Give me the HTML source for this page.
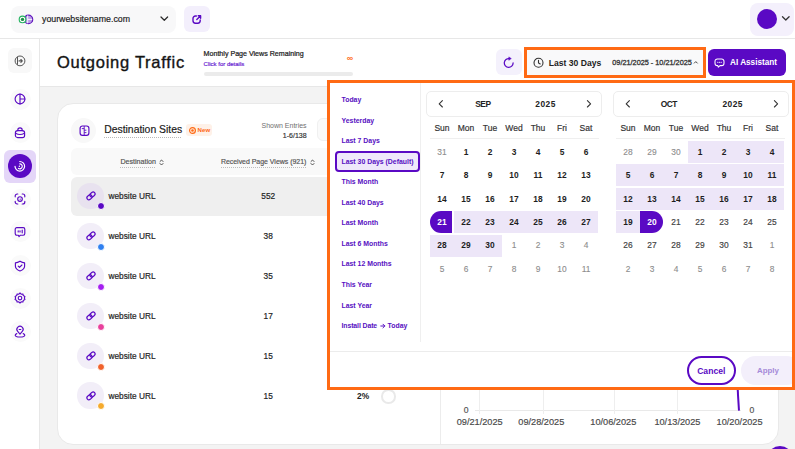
<!DOCTYPE html>
<html><head><meta charset="utf-8"><style>
html,body{margin:0;padding:0;}
body{width:795px;height:449px;overflow:hidden;position:relative;background:#fff;font-family:"Liberation Sans",sans-serif;}
.t{position:absolute;line-height:1;white-space:nowrap;}
svg{display:block}
</style></head><body>
<div style="position:absolute;left:0px;top:38px;width:795px;height:1px;background:#e7e7e7"></div>
<div style="position:absolute;left:11px;top:6px;width:165px;height:26.5px;background:#f8f8f9;border-radius:8px"></div>
<svg style="position:absolute;left:17px;top:12px;overflow:visible;" width="18" height="15" viewBox="0 0 18 15"><circle cx="11.4" cy="7.4" r="4.3" fill="#b99ce6" stroke="#5f14bd" stroke-width="1.2"/><path d="M10.7 3.4 V11.4 M10.7 7.4 H15.2" stroke="#fff" stroke-width="0.9" fill="none"/><circle cx="5.5" cy="7.4" r="3.3" fill="#fff" stroke="#22b35f" stroke-width="1.1"/><circle cx="5.5" cy="7.4" r="1.7" fill="#1c8c46"/></svg>
<div class="t" style="left:42.00px;top:14.85px;font-size:8.8px;font-weight:400;color:#222;-webkit-text-stroke:0.18px currentColor;">yourwebsitename.com</div>
<svg style="position:absolute;left:159px;top:15px;overflow:visible;" width="10" height="7" viewBox="0 0 10 7"><path d="M2 2 L5.3 5.3 L8.6 2" fill="none" stroke="#2a2a2a" stroke-width="1.25" stroke-linecap="round" stroke-linejoin="round"/></svg>
<div style="position:absolute;left:183.6px;top:6px;width:26.4px;height:25.6px;background:#f3effc;border-radius:6px"></div>
<svg style="position:absolute;left:191.8px;top:14.7px;overflow:visible;" width="10" height="9" viewBox="0 0 10 9"><path d="M4.4 1 H3.4 A2.4 2.4 0 0 0 1 3.4 V5.8 A2.4 2.4 0 0 0 3.4 8.2 H5.8 A2.4 2.4 0 0 0 8.2 5.8 V5" fill="none" stroke="#5a09c4" stroke-width="1.4" stroke-linecap="round"/><path d="M4.8 4.4 L8.6 0.8 M6.2 0.8 H8.6 V3.2" fill="none" stroke="#5a09c4" stroke-width="1.4" stroke-linecap="round" stroke-linejoin="round"/></svg>
<div style="position:absolute;left:750px;top:3px;width:44px;height:33px;background:#f4f0fc;border-radius:8px"></div>
<div style="position:absolute;left:757px;top:9px;width:20px;height:20px;border-radius:50%;background:#5a09c4"></div>
<svg style="position:absolute;left:781px;top:15px;overflow:visible;" width="10" height="7" viewBox="0 0 10 7"><path d="M1.5 1.8 L4.8 5 L8.1 1.8" fill="none" stroke="#333" stroke-width="1.3" stroke-linecap="round" stroke-linejoin="round"/></svg>
<div style="position:absolute;left:39px;top:39px;width:1px;height:410px;background:#e7e7e7"></div>
<div style="position:absolute;left:7.7px;top:47.7px;width:24.7px;height:25.3px;background:#f8f8f8;border-radius:6px"></div>
<svg style="position:absolute;left:14px;top:54.8px;overflow:visible;" width="12" height="12" viewBox="0 0 12 12"><circle cx="6" cy="5.9" r="4.9" fill="none" stroke="#555" stroke-width="1"/><path d="M3.5 2 V9.8" fill="none" stroke="#555" stroke-width="1"/><path d="M5 5.9 H8.3 M6.9 4.5 L8.3 5.9 L6.9 7.3" fill="none" stroke="#555" stroke-width="1.1" stroke-linecap="round" stroke-linejoin="round"/></svg>
<div style="position:absolute;left:9.5px;top:88.9px;width:21px;height:21px;border-radius:50%;background:#fafafa"></div>
<div style="position:absolute;left:9.5px;top:122.0px;width:21px;height:21px;border-radius:50%;background:#fafafa"></div>
<div style="position:absolute;left:9.5px;top:189.0px;width:21px;height:21px;border-radius:50%;background:#fafafa"></div>
<div style="position:absolute;left:9.5px;top:221.0px;width:21px;height:21px;border-radius:50%;background:#fafafa"></div>
<div style="position:absolute;left:9.5px;top:254.5px;width:21px;height:21px;border-radius:50%;background:#fafafa"></div>
<div style="position:absolute;left:9.5px;top:287.5px;width:21px;height:21px;border-radius:50%;background:#fafafa"></div>
<div style="position:absolute;left:9.5px;top:321.0px;width:21px;height:21px;border-radius:50%;background:#fafafa"></div>
<svg style="position:absolute;left:14px;top:93.4px;overflow:visible;" width="12" height="12" viewBox="0 0 12 12"><circle cx="6" cy="6" r="4.9" fill="none" stroke="#5a09c4" stroke-width="1.15" stroke-linecap="round" stroke-linejoin="round"/><path d="M6 1.1 V10.9 M6 6 H10.9" fill="none" stroke="#5a09c4" stroke-width="1.15" stroke-linecap="round" stroke-linejoin="round"/></svg>
<svg style="position:absolute;left:14px;top:126.5px;overflow:visible;" width="12" height="12" viewBox="0 0 12 12"><rect x="1.4" y="3.6" width="9.2" height="7" rx="2.2" fill="none" stroke="#5a09c4" stroke-width="1.15" stroke-linecap="round" stroke-linejoin="round"/><path d="M3.8 3.6 V3 a2.2 2.2 0 0 1 4.4 0 V3.6 M1.6 6.2 Q6 8.8 10.4 6.2" fill="none" stroke="#5a09c4" stroke-width="1.15" stroke-linecap="round" stroke-linejoin="round"/></svg>
<div style="position:absolute;left:4px;top:150px;width:32px;height:33px;background:#e4d6f8;border-radius:6px"></div>
<div style="position:absolute;left:7.8px;top:153.9px;width:24.6px;height:24.6px;border-radius:50%;background:#5a09c4"></div>
<svg style="position:absolute;left:14px;top:160px;overflow:visible;" width="12" height="12" viewBox="0 0 12 12"><path d="M5.8 1.5 A4.8 4.8 0 1 1 1 6.3" fill="none" stroke="#fff" stroke-width="1.2" stroke-linecap="round"/><path d="M5.8 3.8 A2.5 2.5 0 1 1 4.55 8.47" fill="none" stroke="#fff" stroke-width="1.2" stroke-linecap="round"/><circle cx="5.4" cy="6.2" r="0.7" fill="#fff"/></svg>
<svg style="position:absolute;left:14px;top:193px;overflow:visible;" width="12" height="12" viewBox="0 0 12 12"><path d="M1.2 3.8 V3 A2 2 0 0 1 3.2 1 H3.8 M8.2 1 H8.8 A2 2 0 0 1 10.8 3 V3.8 M10.8 8.2 V9 A2 2 0 0 1 8.8 11 H8.2 M3.8 11 H3.2 A2 2 0 0 1 1.2 9 V8.2" fill="none" stroke="#5a09c4" stroke-width="1.15" stroke-linecap="round" stroke-linejoin="round"/><circle cx="6" cy="6" r="2.3" fill="none" stroke="#5a09c4" stroke-width="1.15" stroke-linecap="round" stroke-linejoin="round"/><circle cx="6.2" cy="6.2" r="0.6" fill="#5a09c4"/></svg>
<svg style="position:absolute;left:14px;top:226px;overflow:visible;" width="12" height="12" viewBox="0 0 12 12"><path d="M2.8 1.6 H9.2 A1.6 1.6 0 0 1 10.8 3.2 V7.6 A1.6 1.6 0 0 1 9.2 9.2 H6.4 L5 10.6 L4.4 9.2 H2.8 A1.6 1.6 0 0 1 1.2 7.6 V3.2 A1.6 1.6 0 0 1 2.8 1.6 Z" fill="none" stroke="#5a09c4" stroke-width="1.15" stroke-linecap="round" stroke-linejoin="round"/><path d="M4.2 4.7 V6 M6 4.7 V6 M8.2 4 V6.8" fill="none" stroke="#5a09c4" stroke-width="1.15" stroke-linecap="round" stroke-linejoin="round"/></svg>
<svg style="position:absolute;left:14px;top:259.5px;overflow:visible;" width="12" height="12" viewBox="0 0 12 12"><path d="M6 1.2 Q8.4 2.6 10.6 2.9 V6.2 Q10.4 9.4 6 11 Q1.6 9.4 1.4 6.2 V2.9 Q3.6 2.6 6 1.2 Z" fill="none" stroke="#5a09c4" stroke-width="1.15" stroke-linecap="round" stroke-linejoin="round"/><path d="M4.2 6.1 L5.5 7.3 L7.9 5" fill="none" stroke="#5a09c4" stroke-width="1.15" stroke-linecap="round" stroke-linejoin="round"/></svg>
<svg style="position:absolute;left:14px;top:292px;overflow:visible;" width="12" height="12" viewBox="0 0 12 12"><circle cx="6" cy="6" r="1.8" fill="none" stroke="#5a09c4" stroke-width="1.15" stroke-linecap="round" stroke-linejoin="round"/><path d="M6 1 L7.2 2.2 L8.9 2 L9.3 3.6 L10.9 4.4 L10.4 6 L10.9 7.6 L9.3 8.4 L8.9 10 L7.2 9.8 L6 11 L4.8 9.8 L3.1 10 L2.7 8.4 L1.1 7.6 L1.6 6 L1.1 4.4 L2.7 3.6 L3.1 2 L4.8 2.2 Z" fill="none" stroke="#5a09c4" stroke-width="1.15" stroke-linecap="round" stroke-linejoin="round"/></svg>
<svg style="position:absolute;left:14px;top:326px;overflow:visible;" width="12" height="12" viewBox="0 0 12 12"><path d="M6 8.2 L3.7 5.4 A3.1 3.1 0 1 1 8.3 5.4 Z" fill="none" stroke="#5a09c4" stroke-width="1.15" stroke-linecap="round" stroke-linejoin="round"/><path d="M5.2 3.5 H6.8" fill="none" stroke="#5a09c4" stroke-width="1.15" stroke-linecap="round" stroke-linejoin="round"/><path d="M2.8 7.6 Q1.2 8.3 1.2 9.2 Q1.4 11 6 11 Q10.6 11 10.8 9.2 Q10.8 8.3 9.2 7.6" fill="none" stroke="#5a09c4" stroke-width="1.15" stroke-linecap="round" stroke-linejoin="round"/></svg>
<div style="position:absolute;left:40px;top:86px;width:755px;height:1px;background:#e7e7e7"></div>
<div style="position:absolute;left:40px;top:87px;width:755px;height:362px;background:#f3f3f3"></div>
<div class="t" style="left:57.00px;top:54.03px;font-size:16.5px;font-weight:400;color:#141414;-webkit-text-stroke:0.35px currentColor;letter-spacing:0.74px;">Outgoing Traffic</div>
<div class="t" style="left:203.60px;top:51.09px;font-size:7.1px;font-weight:400;color:#222;-webkit-text-stroke:0.22px currentColor;">Monthly Page Views Remaining</div>
<div class="t" style="left:203.60px;top:60.52px;font-size:6.0px;font-weight:400;color:#6a24d2;-webkit-text-stroke:0.2px currentColor;">Click for details</div>
<div class="t" style="left:346.80px;top:54.18px;font-size:9px;font-weight:700;color:#ff6a14;">&#8734;</div>
<div style="position:absolute;left:203.6px;top:72px;width:149.7px;height:3.8px;background:#ebebeb;border-radius:2px"></div>
<div style="position:absolute;left:496px;top:49px;width:26px;height:26px;background:#f4f1fc;border-radius:6px"></div>
<svg style="position:absolute;left:503px;top:57px;overflow:visible;" width="12" height="12" viewBox="0 0 12 12"><path d="M6.3 1.55 A4.4 4.4 0 1 0 10.1 5.9" fill="none" stroke="#5a09c4" stroke-width="1.25" stroke-linecap="round"/><path d="M5.8 -0.1 L8.3 1.6 L5.8 3.3 Z" fill="#5a09c4" stroke="#5a09c4" stroke-width="0.5" stroke-linejoin="round"/></svg>
<div style="position:absolute;left:524px;top:46.5px;width:182px;height:31px;box-sizing:border-box;border:3px solid #ff6a14;background:#f9f9fa"></div>
<svg style="position:absolute;left:533px;top:57px;overflow:visible;" width="12" height="12" viewBox="0 0 12 12"><circle cx="5.5" cy="5.7" r="4.5" fill="none" stroke="#333" stroke-width="1.1"/><path d="M5.5 3.2 V5.9 L7.2 7" fill="none" stroke="#333" stroke-width="1.1" stroke-linecap="round"/></svg>
<div class="t" style="left:548.70px;top:58.82px;font-size:8.6px;font-weight:700;color:#222;">Last 30 Days</div>
<div class="t" style="left:612.30px;top:59.22px;font-size:7.3px;font-weight:400;color:#333;-webkit-text-stroke:0.3px currentColor;">09/21/2025 - 10/21/2025</div>
<svg style="position:absolute;left:693px;top:59.8px;overflow:visible;" width="6" height="5" viewBox="0 0 6 5"><path d="M1 3.4 L2.8 1.6 L4.6 3.4" fill="none" stroke="#333" stroke-width="0.9"/></svg>
<div style="position:absolute;left:708px;top:49.3px;width:77.5px;height:26.3px;background:#5a09c4;border-radius:6px"></div>
<svg style="position:absolute;left:713.6px;top:57.6px;overflow:visible;" width="11" height="10" viewBox="0 0 11 10"><path d="M3.4 1 H7.6 A2.4 2.4 0 0 1 10 3.4 V5.2 A2.4 2.4 0 0 1 7.6 7.6 H6 L4.3 9.2 L3.8 7.6 H3.4 A2.4 2.4 0 0 1 1 5.2 V3.4 A2.4 2.4 0 0 1 3.4 1 Z" fill="none" stroke="#fff" stroke-width="1.05" stroke-linejoin="round"/><path d="M3.7 4.3 H3.9 M5.4 4.3 H5.6 M7.1 4.3 H7.3" stroke="#fff" stroke-width="1.1" stroke-linecap="round"/></svg>
<div class="t" style="left:730.00px;top:58.81px;font-size:8.2px;font-weight:700;color:#fff;">AI Assistant</div>
<div style="position:absolute;left:56.5px;top:102.5px;width:722px;height:342px;background:#fff;border-radius:16px;box-sizing:border-box;border:1px solid #e9e9e9"></div>
<div style="position:absolute;left:440px;top:103px;width:1px;height:340.5px;background:#ececec"></div>
<div style="position:absolute;left:71px;top:117.5px;width:25px;height:25px;border-radius:50%;background:#f8f8f8"></div>
<svg style="position:absolute;left:78.5px;top:124.8px;overflow:visible;" width="11" height="11" viewBox="0 0 11 11"><rect x="1.1" y="1" width="8.8" height="9.4" rx="2.3" fill="none" stroke="#5a09c4" stroke-width="1.15"/><path d="M5.2 1 V10.4 M2.8 3.6 H5.2 M5.2 5.2 H7.4 M5.2 7.6 H7.4" fill="none" stroke="#5a09c4" stroke-width="0.9"/></svg>
<div class="t" style="left:104.20px;top:125.00px;font-size:10.4px;font-weight:400;color:#1a1a1a;-webkit-text-stroke:0.18px currentColor;">Destination Sites</div>
<div style="position:absolute;left:104.2px;top:137px;width:78px;height:1px;background:repeating-linear-gradient(90deg,#b9b9b9 0 1px,transparent 1px 2px)"></div>
<div style="position:absolute;left:186px;top:124px;width:26.2px;height:11.6px;background:#fef1e8;border-radius:3px"></div>
<svg style="position:absolute;left:188.5px;top:126.5px;overflow:visible;" width="7" height="7" viewBox="0 0 7 7"><circle cx="3.5" cy="3.5" r="2.9" fill="none" stroke="#ff6a14" stroke-width="1.2"/><circle cx="3.5" cy="3.5" r="1.3" fill="#ff6a14"/></svg>
<div class="t" style="left:197.60px;top:126.84px;font-size:6.1px;font-weight:700;color:#ff6a14;">New</div>
<div class="t" style="right:488.40px;top:121.87px;font-size:7.0px;font-weight:400;color:#6f6f6f;">Shown Entries</div>
<div class="t" style="right:488.40px;top:131.67px;font-size:7.0px;font-weight:400;color:#333;-webkit-text-stroke:0.18px currentColor;">1-6/138</div>
<div style="position:absolute;left:316.6px;top:118.4px;width:40px;height:23px;box-sizing:border-box;border:1px solid #f0f0f0;border-radius:6px;background:#fafafa"></div>
<div style="position:absolute;left:71px;top:148px;width:370px;height:27px;background:#f9f9f9;border-radius:6px"></div>
<div class="t" style="left:120.40px;top:158.79px;font-size:7.1px;font-weight:400;color:#555;-webkit-text-stroke:0.18px currentColor;">Destination</div>
<div style="position:absolute;left:120.4px;top:167.4px;width:35.6px;height:1px;background:repeating-linear-gradient(90deg,#bdbdbd 0 1px,transparent 1px 2px)"></div>
<div class="t" style="left:220.90px;top:158.92px;font-size:6.95px;font-weight:400;color:#555;-webkit-text-stroke:0.18px currentColor;">Received Page Views (921)</div>
<div style="position:absolute;left:220.9px;top:167.4px;width:85.7px;height:1px;background:repeating-linear-gradient(90deg,#bdbdbd 0 1px,transparent 1px 2px)"></div>
<svg style="position:absolute;left:159.3px;top:158.6px;overflow:visible;" width="5" height="7" viewBox="0 0 5 7"><path d="M1 2.5 L2.5 1 L4 2.5 M1 4.5 L2.5 6 L4 4.5" fill="none" stroke="#444" stroke-width="0.95" stroke-linecap="round" stroke-linejoin="round"/></svg>
<svg style="position:absolute;left:309.8px;top:158.6px;overflow:visible;" width="5" height="7" viewBox="0 0 5 7"><path d="M1 2.5 L2.5 1 L4 2.5 M1 4.5 L2.5 6 L4 4.5" fill="none" stroke="#444" stroke-width="0.95" stroke-linecap="round" stroke-linejoin="round"/></svg>
<div style="position:absolute;left:71px;top:176.5px;width:370px;height:39px;background:#efefef;border-radius:6px"></div>
<div style="position:absolute;left:77.4px;top:182.65px;width:26.3px;height:26.3px;border-radius:50%;background:#e8e2ef"></div>
<svg style="position:absolute;left:84.5px;top:189.8px;overflow:visible;" width="12" height="12" viewBox="0 0 12 12"><rect x="1.75" y="5.3" width="5.5" height="4" rx="2" transform="rotate(-40 4.5 7.3)" fill="none" stroke="#5a09c4" stroke-width="1.15"/><rect x="4.75" y="2.5" width="5.5" height="4" rx="2" transform="rotate(-40 7.5 4.5)" fill="none" stroke="#5a09c4" stroke-width="1.15"/></svg>
<div style="position:absolute;left:96.90px;top:202.30px;width:6px;height:6px;border-radius:50%;background:#5a09c4;border:0.6px solid #fff"></div>
<div class="t" style="left:108.50px;top:192.17px;font-size:8.3px;font-weight:400;color:#222;-webkit-text-stroke:0.18px currentColor;">website URL</div>
<div class="t" style="left:168.20px;width:200px;text-align:center;top:192.17px;font-size:8.3px;font-weight:400;color:#222;-webkit-text-stroke:0.18px currentColor;">552</div>
<div style="position:absolute;left:77.4px;top:222.85px;width:26.3px;height:26.3px;border-radius:50%;background:#f2eef8"></div>
<svg style="position:absolute;left:84.5px;top:230px;overflow:visible;" width="12" height="12" viewBox="0 0 12 12"><rect x="1.75" y="5.3" width="5.5" height="4" rx="2" transform="rotate(-40 4.5 7.3)" fill="none" stroke="#5a09c4" stroke-width="1.15"/><rect x="4.75" y="2.5" width="5.5" height="4" rx="2" transform="rotate(-40 7.5 4.5)" fill="none" stroke="#5a09c4" stroke-width="1.15"/></svg>
<div style="position:absolute;left:96.90px;top:242.50px;width:6px;height:6px;border-radius:50%;background:#2f80f0;border:0.6px solid #fff"></div>
<div class="t" style="left:108.50px;top:232.37px;font-size:8.3px;font-weight:400;color:#222;-webkit-text-stroke:0.18px currentColor;">website URL</div>
<div class="t" style="left:168.20px;width:200px;text-align:center;top:232.37px;font-size:8.3px;font-weight:400;color:#222;-webkit-text-stroke:0.18px currentColor;">38</div>
<div style="position:absolute;left:77.4px;top:262.85px;width:26.3px;height:26.3px;border-radius:50%;background:#f2eef8"></div>
<svg style="position:absolute;left:84.5px;top:270px;overflow:visible;" width="12" height="12" viewBox="0 0 12 12"><rect x="1.75" y="5.3" width="5.5" height="4" rx="2" transform="rotate(-40 4.5 7.3)" fill="none" stroke="#5a09c4" stroke-width="1.15"/><rect x="4.75" y="2.5" width="5.5" height="4" rx="2" transform="rotate(-40 7.5 4.5)" fill="none" stroke="#5a09c4" stroke-width="1.15"/></svg>
<div style="position:absolute;left:96.90px;top:282.50px;width:6px;height:6px;border-radius:50%;background:#a41ff0;border:0.6px solid #fff"></div>
<div class="t" style="left:108.50px;top:272.37px;font-size:8.3px;font-weight:400;color:#222;-webkit-text-stroke:0.18px currentColor;">website URL</div>
<div class="t" style="left:168.20px;width:200px;text-align:center;top:272.37px;font-size:8.3px;font-weight:400;color:#222;-webkit-text-stroke:0.18px currentColor;">35</div>
<div style="position:absolute;left:77.4px;top:302.85px;width:26.3px;height:26.3px;border-radius:50%;background:#f2eef8"></div>
<svg style="position:absolute;left:84.5px;top:310px;overflow:visible;" width="12" height="12" viewBox="0 0 12 12"><rect x="1.75" y="5.3" width="5.5" height="4" rx="2" transform="rotate(-40 4.5 7.3)" fill="none" stroke="#5a09c4" stroke-width="1.15"/><rect x="4.75" y="2.5" width="5.5" height="4" rx="2" transform="rotate(-40 7.5 4.5)" fill="none" stroke="#5a09c4" stroke-width="1.15"/></svg>
<div style="position:absolute;left:96.90px;top:322.50px;width:6px;height:6px;border-radius:50%;background:#e8409c;border:0.6px solid #fff"></div>
<div class="t" style="left:108.50px;top:312.37px;font-size:8.3px;font-weight:400;color:#222;-webkit-text-stroke:0.18px currentColor;">website URL</div>
<div class="t" style="left:168.20px;width:200px;text-align:center;top:312.37px;font-size:8.3px;font-weight:400;color:#222;-webkit-text-stroke:0.18px currentColor;">17</div>
<div style="position:absolute;left:77.4px;top:342.85px;width:26.3px;height:26.3px;border-radius:50%;background:#f2eef8"></div>
<svg style="position:absolute;left:84.5px;top:350px;overflow:visible;" width="12" height="12" viewBox="0 0 12 12"><rect x="1.75" y="5.3" width="5.5" height="4" rx="2" transform="rotate(-40 4.5 7.3)" fill="none" stroke="#5a09c4" stroke-width="1.15"/><rect x="4.75" y="2.5" width="5.5" height="4" rx="2" transform="rotate(-40 7.5 4.5)" fill="none" stroke="#5a09c4" stroke-width="1.15"/></svg>
<div style="position:absolute;left:96.90px;top:362.50px;width:6px;height:6px;border-radius:50%;background:#f0622c;border:0.6px solid #fff"></div>
<div class="t" style="left:108.50px;top:352.37px;font-size:8.3px;font-weight:400;color:#222;-webkit-text-stroke:0.18px currentColor;">website URL</div>
<div class="t" style="left:168.20px;width:200px;text-align:center;top:352.37px;font-size:8.3px;font-weight:400;color:#222;-webkit-text-stroke:0.18px currentColor;">15</div>
<div style="position:absolute;left:77.4px;top:382.45px;width:26.3px;height:26.3px;border-radius:50%;background:#f2eef8"></div>
<svg style="position:absolute;left:84.5px;top:389.6px;overflow:visible;" width="12" height="12" viewBox="0 0 12 12"><rect x="1.75" y="5.3" width="5.5" height="4" rx="2" transform="rotate(-40 4.5 7.3)" fill="none" stroke="#5a09c4" stroke-width="1.15"/><rect x="4.75" y="2.5" width="5.5" height="4" rx="2" transform="rotate(-40 7.5 4.5)" fill="none" stroke="#5a09c4" stroke-width="1.15"/></svg>
<div style="position:absolute;left:96.90px;top:402.10px;width:6px;height:6px;border-radius:50%;background:#f5aa2c;border:0.6px solid #fff"></div>
<div class="t" style="left:108.50px;top:391.97px;font-size:8.3px;font-weight:400;color:#222;-webkit-text-stroke:0.18px currentColor;">website URL</div>
<div class="t" style="left:168.20px;width:200px;text-align:center;top:391.97px;font-size:8.3px;font-weight:400;color:#222;-webkit-text-stroke:0.18px currentColor;">15</div>
<div class="t" style="left:357.00px;top:392.09px;font-size:8.4px;font-weight:700;color:#222;">2%</div>
<div style="position:absolute;left:381px;top:389px;width:14.5px;height:14.5px;box-sizing:border-box;border-radius:50%;border:2px solid #e9e9e9"></div>
<div class="t" style="left:463.80px;top:405.52px;font-size:8.6px;font-weight:400;color:#555;-webkit-text-stroke:0.18px currentColor;">0</div>
<div class="t" style="left:749.60px;top:405.52px;font-size:8.6px;font-weight:400;color:#555;-webkit-text-stroke:0.18px currentColor;">0</div>
<div style="position:absolute;left:474.8px;top:410px;width:266px;height:1px;background:#e9e9e9"></div>
<div style="position:absolute;left:479.4px;top:388px;width:1px;height:26px;background:#eeeeee"></div>
<div style="position:absolute;left:542.5px;top:388px;width:1px;height:26px;background:#eeeeee"></div>
<div style="position:absolute;left:613.8px;top:388px;width:1px;height:26px;background:#eeeeee"></div>
<div style="position:absolute;left:676.5px;top:388px;width:1px;height:26px;background:#eeeeee"></div>
<svg style="position:absolute;left:736px;top:388px;overflow:visible;" width="6" height="24" viewBox="0 0 6 24"><path d="M1.6 0 L3 22.6" stroke="#5a09c4" stroke-width="2"/></svg>
<div class="t" style="left:456.70px;top:417.51px;font-size:9.2px;font-weight:400;color:#4a4a4a;-webkit-text-stroke:0.18px currentColor;">09/21/2025</div>
<div class="t" style="left:518.30px;top:417.51px;font-size:9.2px;font-weight:400;color:#4a4a4a;-webkit-text-stroke:0.18px currentColor;">09/28/2025</div>
<div class="t" style="left:590.30px;top:417.51px;font-size:9.2px;font-weight:400;color:#4a4a4a;-webkit-text-stroke:0.18px currentColor;">10/06/2025</div>
<div class="t" style="left:654.40px;top:417.51px;font-size:9.2px;font-weight:400;color:#4a4a4a;-webkit-text-stroke:0.18px currentColor;">10/13/2025</div>
<div class="t" style="left:716.60px;top:417.51px;font-size:9.2px;font-weight:400;color:#4a4a4a;-webkit-text-stroke:0.18px currentColor;">10/20/2025</div>
<div style="position:absolute;left:767px;top:446px;width:26px;height:26px;border-radius:50%;background:#5a09c4"></div>
<div style="position:absolute;left:327px;top:80px;width:468px;height:310px;box-sizing:border-box;border:3px solid #ff6a14;background:#fff;overflow:hidden">
<div style="position:absolute;left:90.40px;top:0.00px;width:1px;height:258.5px;background:#efefef"></div>
<div style="position:absolute;left:0.00px;top:268.00px;width:462px;height:1px;background:#ececec"></div>
<div style="position:absolute;left:5.40px;top:68.20px;width:84.4px;height:20.8px;box-sizing:border-box;border:2px solid #5a09c4;border-radius:4px;background:#efe8fb"></div>
<div class="t" style="left:11.50px;top:14.06px;font-size:6.9px;font-weight:700;color:#5710c2;">Today</div>
<div class="t" style="left:11.50px;top:34.60px;font-size:6.9px;font-weight:700;color:#5710c2;">Yesterday</div>
<div class="t" style="left:11.50px;top:55.15px;font-size:6.9px;font-weight:700;color:#5710c2;">Last 7 Days</div>
<div class="t" style="left:11.50px;top:76.09px;font-size:6.9px;font-weight:700;color:#5710c2;">Last 30 Days (Default)</div>
<div class="t" style="left:11.50px;top:96.24px;font-size:6.9px;font-weight:700;color:#5710c2;">This Month</div>
<div class="t" style="left:11.50px;top:116.78px;font-size:6.9px;font-weight:700;color:#5710c2;">Last 40 Days</div>
<div class="t" style="left:11.50px;top:137.33px;font-size:6.9px;font-weight:700;color:#5710c2;">Last Month</div>
<div class="t" style="left:11.50px;top:157.87px;font-size:6.9px;font-weight:700;color:#5710c2;">Last 6 Months</div>
<div class="t" style="left:11.50px;top:178.42px;font-size:6.9px;font-weight:700;color:#5710c2;">Last 12 Months</div>
<div class="t" style="left:11.50px;top:198.96px;font-size:6.9px;font-weight:700;color:#5710c2;">This Year</div>
<div class="t" style="left:11.50px;top:219.51px;font-size:6.9px;font-weight:700;color:#5710c2;">Last Year</div>
<div class="t" style="left:11.50px;top:240.05px;font-size:6.9px;font-weight:700;color:#5710c2;letter-spacing:-0.1px;">Install Date</div>
<div class="t" style="left:57.60px;top:240.05px;font-size:6.9px;font-weight:700;color:#5710c2;">Today</div>
<svg style="position:absolute;left:50.10px;top:240.00px;overflow:visible" width="6" height="6" viewBox="0 0 6 6"><path d="M0.8 3 H4.8 M3 1.2 L4.8 3 L3 4.8" fill="none" stroke="#5710c2" stroke-width="1" stroke-linecap="round" stroke-linejoin="round"/></svg>
<div style="position:absolute;left:95.70px;top:7.70px;width:176.5px;height:26px;box-sizing:border-box;border:1px solid #ededed;border-radius:5px"></div>
<svg style="position:absolute;left:107.70px;top:17.00px;overflow:visible" width="6" height="8" viewBox="0 0 6 8"><path d="M4.4 0.6 L1.2 3.8 L4.4 7" fill="none" stroke="#333" stroke-width="1.1" stroke-linecap="round" stroke-linejoin="round"/></svg>
<svg style="position:absolute;left:256.20px;top:17.00px;overflow:visible" width="6" height="8" viewBox="0 0 6 8"><path d="M1.4 0.6 L4.6 3.8 L1.4 7" fill="none" stroke="#333" stroke-width="1.1" stroke-linecap="round" stroke-linejoin="round"/></svg>
<div class="t" style="left:145.20px;top:16.79px;font-size:8.4px;font-weight:700;color:#222;letter-spacing:-0.45px;">SEP</div>
<div class="t" style="left:205.30px;top:16.69px;font-size:8.4px;font-weight:700;color:#222;letter-spacing:0.5px;">2025</div>
<div class="t" style="left:62.00px;width:100px;text-align:center;top:40.80px;font-size:8.5px;font-weight:400;color:#333;-webkit-text-stroke:0.18px currentColor;">Sun</div>
<div class="t" style="left:86.00px;width:100px;text-align:center;top:40.80px;font-size:8.5px;font-weight:400;color:#333;-webkit-text-stroke:0.18px currentColor;">Mon</div>
<div class="t" style="left:110.00px;width:100px;text-align:center;top:40.80px;font-size:8.5px;font-weight:400;color:#333;-webkit-text-stroke:0.18px currentColor;">Tue</div>
<div class="t" style="left:134.00px;width:100px;text-align:center;top:40.80px;font-size:8.5px;font-weight:400;color:#333;-webkit-text-stroke:0.18px currentColor;">Wed</div>
<div class="t" style="left:158.00px;width:100px;text-align:center;top:40.80px;font-size:8.5px;font-weight:400;color:#333;-webkit-text-stroke:0.18px currentColor;">Thu</div>
<div class="t" style="left:182.00px;width:100px;text-align:center;top:40.80px;font-size:8.5px;font-weight:400;color:#333;-webkit-text-stroke:0.18px currentColor;">Fri</div>
<div class="t" style="left:206.00px;width:100px;text-align:center;top:40.80px;font-size:8.5px;font-weight:400;color:#333;-webkit-text-stroke:0.18px currentColor;">Sat</div>
<div style="position:absolute;left:100.00px;top:55.00px;width:168.5px;height:1px;background:#efefef"></div>
<div class="t" style="left:62.00px;width:100px;text-align:center;top:64.79px;font-size:8.4px;font-weight:400;color:#8d8d8d;-webkit-text-stroke:0.12px currentColor;">31</div>
<div class="t" style="left:86.00px;width:100px;text-align:center;top:64.79px;font-size:8.4px;font-weight:700;color:#1e1e1e;">1</div>
<div class="t" style="left:110.00px;width:100px;text-align:center;top:64.79px;font-size:8.4px;font-weight:700;color:#1e1e1e;">2</div>
<div class="t" style="left:134.00px;width:100px;text-align:center;top:64.79px;font-size:8.4px;font-weight:700;color:#1e1e1e;">3</div>
<div class="t" style="left:158.00px;width:100px;text-align:center;top:64.79px;font-size:8.4px;font-weight:700;color:#1e1e1e;">4</div>
<div class="t" style="left:182.00px;width:100px;text-align:center;top:64.79px;font-size:8.4px;font-weight:700;color:#1e1e1e;">5</div>
<div class="t" style="left:206.00px;width:100px;text-align:center;top:64.79px;font-size:8.4px;font-weight:700;color:#1e1e1e;">6</div>
<div class="t" style="left:62.00px;width:100px;text-align:center;top:88.21px;font-size:8.4px;font-weight:700;color:#1e1e1e;">7</div>
<div class="t" style="left:86.00px;width:100px;text-align:center;top:88.21px;font-size:8.4px;font-weight:700;color:#1e1e1e;">8</div>
<div class="t" style="left:110.00px;width:100px;text-align:center;top:88.21px;font-size:8.4px;font-weight:700;color:#1e1e1e;">9</div>
<div class="t" style="left:134.00px;width:100px;text-align:center;top:88.21px;font-size:8.4px;font-weight:700;color:#1e1e1e;">10</div>
<div class="t" style="left:158.00px;width:100px;text-align:center;top:88.21px;font-size:8.4px;font-weight:700;color:#1e1e1e;">11</div>
<div class="t" style="left:182.00px;width:100px;text-align:center;top:88.21px;font-size:8.4px;font-weight:700;color:#1e1e1e;">12</div>
<div class="t" style="left:206.00px;width:100px;text-align:center;top:88.21px;font-size:8.4px;font-weight:700;color:#1e1e1e;">13</div>
<div class="t" style="left:62.00px;width:100px;text-align:center;top:111.63px;font-size:8.4px;font-weight:700;color:#1e1e1e;">14</div>
<div class="t" style="left:86.00px;width:100px;text-align:center;top:111.63px;font-size:8.4px;font-weight:700;color:#1e1e1e;">15</div>
<div class="t" style="left:110.00px;width:100px;text-align:center;top:111.63px;font-size:8.4px;font-weight:700;color:#1e1e1e;">16</div>
<div class="t" style="left:134.00px;width:100px;text-align:center;top:111.63px;font-size:8.4px;font-weight:700;color:#1e1e1e;">17</div>
<div class="t" style="left:158.00px;width:100px;text-align:center;top:111.63px;font-size:8.4px;font-weight:700;color:#1e1e1e;">18</div>
<div class="t" style="left:182.00px;width:100px;text-align:center;top:111.63px;font-size:8.4px;font-weight:700;color:#1e1e1e;">19</div>
<div class="t" style="left:206.00px;width:100px;text-align:center;top:111.63px;font-size:8.4px;font-weight:700;color:#1e1e1e;">20</div>
<div style="position:absolute;left:100.00px;top:128.26px;width:22px;height:22px;background:#5a09c4;border-radius:11px 0 0 11px"></div>
<div class="t" style="left:62.00px;width:100px;text-align:center;top:135.05px;font-size:8.4px;font-weight:700;color:#fff;">21</div>
<div style="position:absolute;left:124.00px;top:128.26px;width:24px;height:22px;background:#ede6f8"></div>
<div class="t" style="left:86.00px;width:100px;text-align:center;top:135.05px;font-size:8.4px;font-weight:700;color:#1e1e1e;">22</div>
<div style="position:absolute;left:148.00px;top:128.26px;width:24px;height:22px;background:#ede6f8"></div>
<div class="t" style="left:110.00px;width:100px;text-align:center;top:135.05px;font-size:8.4px;font-weight:700;color:#1e1e1e;">23</div>
<div style="position:absolute;left:172.00px;top:128.26px;width:24px;height:22px;background:#ede6f8"></div>
<div class="t" style="left:134.00px;width:100px;text-align:center;top:135.05px;font-size:8.4px;font-weight:700;color:#1e1e1e;">24</div>
<div style="position:absolute;left:196.00px;top:128.26px;width:24px;height:22px;background:#ede6f8"></div>
<div class="t" style="left:158.00px;width:100px;text-align:center;top:135.05px;font-size:8.4px;font-weight:700;color:#1e1e1e;">25</div>
<div style="position:absolute;left:220.00px;top:128.26px;width:24px;height:22px;background:#ede6f8"></div>
<div class="t" style="left:182.00px;width:100px;text-align:center;top:135.05px;font-size:8.4px;font-weight:700;color:#1e1e1e;">26</div>
<div style="position:absolute;left:244.00px;top:128.26px;width:24px;height:22px;background:#ede6f8"></div>
<div class="t" style="left:206.00px;width:100px;text-align:center;top:135.05px;font-size:8.4px;font-weight:700;color:#1e1e1e;">27</div>
<div style="position:absolute;left:100.00px;top:151.68px;width:24px;height:22px;background:#ede6f8"></div>
<div class="t" style="left:62.00px;width:100px;text-align:center;top:158.47px;font-size:8.4px;font-weight:700;color:#1e1e1e;">28</div>
<div style="position:absolute;left:124.00px;top:151.68px;width:24px;height:22px;background:#ede6f8"></div>
<div class="t" style="left:86.00px;width:100px;text-align:center;top:158.47px;font-size:8.4px;font-weight:700;color:#1e1e1e;">29</div>
<div style="position:absolute;left:148.00px;top:151.68px;width:24px;height:22px;background:#ede6f8"></div>
<div class="t" style="left:110.00px;width:100px;text-align:center;top:158.47px;font-size:8.4px;font-weight:700;color:#1e1e1e;">30</div>
<div class="t" style="left:134.00px;width:100px;text-align:center;top:158.47px;font-size:8.4px;font-weight:400;color:#8d8d8d;-webkit-text-stroke:0.12px currentColor;">1</div>
<div class="t" style="left:158.00px;width:100px;text-align:center;top:158.47px;font-size:8.4px;font-weight:400;color:#8d8d8d;-webkit-text-stroke:0.12px currentColor;">2</div>
<div class="t" style="left:182.00px;width:100px;text-align:center;top:158.47px;font-size:8.4px;font-weight:400;color:#8d8d8d;-webkit-text-stroke:0.12px currentColor;">3</div>
<div class="t" style="left:206.00px;width:100px;text-align:center;top:158.47px;font-size:8.4px;font-weight:400;color:#8d8d8d;-webkit-text-stroke:0.12px currentColor;">4</div>
<div class="t" style="left:62.00px;width:100px;text-align:center;top:181.89px;font-size:8.4px;font-weight:400;color:#8d8d8d;-webkit-text-stroke:0.12px currentColor;">5</div>
<div class="t" style="left:86.00px;width:100px;text-align:center;top:181.89px;font-size:8.4px;font-weight:400;color:#8d8d8d;-webkit-text-stroke:0.12px currentColor;">6</div>
<div class="t" style="left:110.00px;width:100px;text-align:center;top:181.89px;font-size:8.4px;font-weight:400;color:#8d8d8d;-webkit-text-stroke:0.12px currentColor;">7</div>
<div class="t" style="left:134.00px;width:100px;text-align:center;top:181.89px;font-size:8.4px;font-weight:400;color:#8d8d8d;-webkit-text-stroke:0.12px currentColor;">8</div>
<div class="t" style="left:158.00px;width:100px;text-align:center;top:181.89px;font-size:8.4px;font-weight:400;color:#8d8d8d;-webkit-text-stroke:0.12px currentColor;">9</div>
<div class="t" style="left:182.00px;width:100px;text-align:center;top:181.89px;font-size:8.4px;font-weight:400;color:#8d8d8d;-webkit-text-stroke:0.12px currentColor;">10</div>
<div class="t" style="left:206.00px;width:100px;text-align:center;top:181.89px;font-size:8.4px;font-weight:400;color:#8d8d8d;-webkit-text-stroke:0.12px currentColor;">11</div>
<div style="position:absolute;left:282.60px;top:7.70px;width:176.5px;height:26px;box-sizing:border-box;border:1px solid #ededed;border-radius:5px"></div>
<svg style="position:absolute;left:294.60px;top:17.00px;overflow:visible" width="6" height="8" viewBox="0 0 6 8"><path d="M4.4 0.6 L1.2 3.8 L4.4 7" fill="none" stroke="#333" stroke-width="1.1" stroke-linecap="round" stroke-linejoin="round"/></svg>
<svg style="position:absolute;left:443.10px;top:17.00px;overflow:visible" width="6" height="8" viewBox="0 0 6 8"><path d="M1.4 0.6 L4.6 3.8 L1.4 7" fill="none" stroke="#333" stroke-width="1.1" stroke-linecap="round" stroke-linejoin="round"/></svg>
<div class="t" style="left:330.70px;top:16.79px;font-size:8.4px;font-weight:700;color:#222;letter-spacing:-0.45px;">OCT</div>
<div class="t" style="left:392.40px;top:16.69px;font-size:8.4px;font-weight:700;color:#222;letter-spacing:0.5px;">2025</div>
<div class="t" style="left:248.00px;width:100px;text-align:center;top:40.80px;font-size:8.5px;font-weight:400;color:#333;-webkit-text-stroke:0.18px currentColor;">Sun</div>
<div class="t" style="left:272.00px;width:100px;text-align:center;top:40.80px;font-size:8.5px;font-weight:400;color:#333;-webkit-text-stroke:0.18px currentColor;">Mon</div>
<div class="t" style="left:296.00px;width:100px;text-align:center;top:40.80px;font-size:8.5px;font-weight:400;color:#333;-webkit-text-stroke:0.18px currentColor;">Tue</div>
<div class="t" style="left:320.00px;width:100px;text-align:center;top:40.80px;font-size:8.5px;font-weight:400;color:#333;-webkit-text-stroke:0.18px currentColor;">Wed</div>
<div class="t" style="left:344.00px;width:100px;text-align:center;top:40.80px;font-size:8.5px;font-weight:400;color:#333;-webkit-text-stroke:0.18px currentColor;">Thu</div>
<div class="t" style="left:368.00px;width:100px;text-align:center;top:40.80px;font-size:8.5px;font-weight:400;color:#333;-webkit-text-stroke:0.18px currentColor;">Fri</div>
<div class="t" style="left:392.00px;width:100px;text-align:center;top:40.80px;font-size:8.5px;font-weight:400;color:#333;-webkit-text-stroke:0.18px currentColor;">Sat</div>
<div style="position:absolute;left:286.00px;top:55.00px;width:168.5px;height:1px;background:#efefef"></div>
<div class="t" style="left:248.00px;width:100px;text-align:center;top:64.79px;font-size:8.4px;font-weight:400;color:#8d8d8d;-webkit-text-stroke:0.12px currentColor;">28</div>
<div class="t" style="left:272.00px;width:100px;text-align:center;top:64.79px;font-size:8.4px;font-weight:400;color:#8d8d8d;-webkit-text-stroke:0.12px currentColor;">29</div>
<div class="t" style="left:296.00px;width:100px;text-align:center;top:64.79px;font-size:8.4px;font-weight:400;color:#8d8d8d;-webkit-text-stroke:0.12px currentColor;">30</div>
<div style="position:absolute;left:358.00px;top:58.00px;width:24px;height:22px;background:#ede6f8"></div>
<div class="t" style="left:320.00px;width:100px;text-align:center;top:64.79px;font-size:8.4px;font-weight:700;color:#1e1e1e;">1</div>
<div style="position:absolute;left:382.00px;top:58.00px;width:24px;height:22px;background:#ede6f8"></div>
<div class="t" style="left:344.00px;width:100px;text-align:center;top:64.79px;font-size:8.4px;font-weight:700;color:#1e1e1e;">2</div>
<div style="position:absolute;left:406.00px;top:58.00px;width:24px;height:22px;background:#ede6f8"></div>
<div class="t" style="left:368.00px;width:100px;text-align:center;top:64.79px;font-size:8.4px;font-weight:700;color:#1e1e1e;">3</div>
<div style="position:absolute;left:430.00px;top:58.00px;width:24px;height:22px;background:#ede6f8"></div>
<div class="t" style="left:392.00px;width:100px;text-align:center;top:64.79px;font-size:8.4px;font-weight:700;color:#1e1e1e;">4</div>
<div style="position:absolute;left:286.00px;top:81.42px;width:24px;height:22px;background:#ede6f8"></div>
<div class="t" style="left:248.00px;width:100px;text-align:center;top:88.21px;font-size:8.4px;font-weight:700;color:#1e1e1e;">5</div>
<div style="position:absolute;left:310.00px;top:81.42px;width:24px;height:22px;background:#ede6f8"></div>
<div class="t" style="left:272.00px;width:100px;text-align:center;top:88.21px;font-size:8.4px;font-weight:700;color:#1e1e1e;">6</div>
<div style="position:absolute;left:334.00px;top:81.42px;width:24px;height:22px;background:#ede6f8"></div>
<div class="t" style="left:296.00px;width:100px;text-align:center;top:88.21px;font-size:8.4px;font-weight:700;color:#1e1e1e;">7</div>
<div style="position:absolute;left:358.00px;top:81.42px;width:24px;height:22px;background:#ede6f8"></div>
<div class="t" style="left:320.00px;width:100px;text-align:center;top:88.21px;font-size:8.4px;font-weight:700;color:#1e1e1e;">8</div>
<div style="position:absolute;left:382.00px;top:81.42px;width:24px;height:22px;background:#ede6f8"></div>
<div class="t" style="left:344.00px;width:100px;text-align:center;top:88.21px;font-size:8.4px;font-weight:700;color:#1e1e1e;">9</div>
<div style="position:absolute;left:406.00px;top:81.42px;width:24px;height:22px;background:#ede6f8"></div>
<div class="t" style="left:368.00px;width:100px;text-align:center;top:88.21px;font-size:8.4px;font-weight:700;color:#1e1e1e;">10</div>
<div style="position:absolute;left:430.00px;top:81.42px;width:24px;height:22px;background:#ede6f8"></div>
<div class="t" style="left:392.00px;width:100px;text-align:center;top:88.21px;font-size:8.4px;font-weight:700;color:#1e1e1e;">11</div>
<div style="position:absolute;left:286.00px;top:104.84px;width:24px;height:22px;background:#ede6f8"></div>
<div class="t" style="left:248.00px;width:100px;text-align:center;top:111.63px;font-size:8.4px;font-weight:700;color:#1e1e1e;">12</div>
<div style="position:absolute;left:310.00px;top:104.84px;width:24px;height:22px;background:#ede6f8"></div>
<div class="t" style="left:272.00px;width:100px;text-align:center;top:111.63px;font-size:8.4px;font-weight:700;color:#1e1e1e;">13</div>
<div style="position:absolute;left:334.00px;top:104.84px;width:24px;height:22px;background:#ede6f8"></div>
<div class="t" style="left:296.00px;width:100px;text-align:center;top:111.63px;font-size:8.4px;font-weight:700;color:#1e1e1e;">14</div>
<div style="position:absolute;left:358.00px;top:104.84px;width:24px;height:22px;background:#ede6f8"></div>
<div class="t" style="left:320.00px;width:100px;text-align:center;top:111.63px;font-size:8.4px;font-weight:700;color:#1e1e1e;">15</div>
<div style="position:absolute;left:382.00px;top:104.84px;width:24px;height:22px;background:#ede6f8"></div>
<div class="t" style="left:344.00px;width:100px;text-align:center;top:111.63px;font-size:8.4px;font-weight:700;color:#1e1e1e;">16</div>
<div style="position:absolute;left:406.00px;top:104.84px;width:24px;height:22px;background:#ede6f8"></div>
<div class="t" style="left:368.00px;width:100px;text-align:center;top:111.63px;font-size:8.4px;font-weight:700;color:#1e1e1e;">17</div>
<div style="position:absolute;left:430.00px;top:104.84px;width:24px;height:22px;background:#ede6f8"></div>
<div class="t" style="left:392.00px;width:100px;text-align:center;top:111.63px;font-size:8.4px;font-weight:700;color:#1e1e1e;">18</div>
<div style="position:absolute;left:286.00px;top:128.26px;width:24px;height:22px;background:#ede6f8"></div>
<div class="t" style="left:248.00px;width:100px;text-align:center;top:135.05px;font-size:8.4px;font-weight:700;color:#1e1e1e;">19</div>
<div style="position:absolute;left:310.00px;top:128.26px;width:23px;height:22px;background:#5a09c4;border-radius:0 11px 11px 0"></div>
<div class="t" style="left:272.00px;width:100px;text-align:center;top:135.05px;font-size:8.4px;font-weight:700;color:#fff;">20</div>
<div class="t" style="left:296.00px;width:100px;text-align:center;top:135.05px;font-size:8.4px;font-weight:400;color:#444;-webkit-text-stroke:0.18px currentColor;">21</div>
<div class="t" style="left:320.00px;width:100px;text-align:center;top:135.05px;font-size:8.4px;font-weight:400;color:#444;-webkit-text-stroke:0.18px currentColor;">22</div>
<div class="t" style="left:344.00px;width:100px;text-align:center;top:135.05px;font-size:8.4px;font-weight:400;color:#444;-webkit-text-stroke:0.18px currentColor;">23</div>
<div class="t" style="left:368.00px;width:100px;text-align:center;top:135.05px;font-size:8.4px;font-weight:400;color:#444;-webkit-text-stroke:0.18px currentColor;">24</div>
<div class="t" style="left:392.00px;width:100px;text-align:center;top:135.05px;font-size:8.4px;font-weight:400;color:#444;-webkit-text-stroke:0.18px currentColor;">25</div>
<div class="t" style="left:248.00px;width:100px;text-align:center;top:158.47px;font-size:8.4px;font-weight:400;color:#444;-webkit-text-stroke:0.18px currentColor;">26</div>
<div class="t" style="left:272.00px;width:100px;text-align:center;top:158.47px;font-size:8.4px;font-weight:400;color:#444;-webkit-text-stroke:0.18px currentColor;">27</div>
<div class="t" style="left:296.00px;width:100px;text-align:center;top:158.47px;font-size:8.4px;font-weight:400;color:#444;-webkit-text-stroke:0.18px currentColor;">28</div>
<div class="t" style="left:320.00px;width:100px;text-align:center;top:158.47px;font-size:8.4px;font-weight:400;color:#444;-webkit-text-stroke:0.18px currentColor;">29</div>
<div class="t" style="left:344.00px;width:100px;text-align:center;top:158.47px;font-size:8.4px;font-weight:400;color:#444;-webkit-text-stroke:0.18px currentColor;">30</div>
<div class="t" style="left:368.00px;width:100px;text-align:center;top:158.47px;font-size:8.4px;font-weight:400;color:#444;-webkit-text-stroke:0.18px currentColor;">31</div>
<div class="t" style="left:392.00px;width:100px;text-align:center;top:158.47px;font-size:8.4px;font-weight:400;color:#8d8d8d;-webkit-text-stroke:0.12px currentColor;">1</div>
<div class="t" style="left:248.00px;width:100px;text-align:center;top:181.89px;font-size:8.4px;font-weight:400;color:#8d8d8d;-webkit-text-stroke:0.12px currentColor;">2</div>
<div class="t" style="left:272.00px;width:100px;text-align:center;top:181.89px;font-size:8.4px;font-weight:400;color:#8d8d8d;-webkit-text-stroke:0.12px currentColor;">3</div>
<div class="t" style="left:296.00px;width:100px;text-align:center;top:181.89px;font-size:8.4px;font-weight:400;color:#8d8d8d;-webkit-text-stroke:0.12px currentColor;">4</div>
<div class="t" style="left:320.00px;width:100px;text-align:center;top:181.89px;font-size:8.4px;font-weight:400;color:#8d8d8d;-webkit-text-stroke:0.12px currentColor;">5</div>
<div class="t" style="left:344.00px;width:100px;text-align:center;top:181.89px;font-size:8.4px;font-weight:400;color:#8d8d8d;-webkit-text-stroke:0.12px currentColor;">6</div>
<div class="t" style="left:368.00px;width:100px;text-align:center;top:181.89px;font-size:8.4px;font-weight:400;color:#8d8d8d;-webkit-text-stroke:0.12px currentColor;">7</div>
<div class="t" style="left:392.00px;width:100px;text-align:center;top:181.89px;font-size:8.4px;font-weight:400;color:#8d8d8d;-webkit-text-stroke:0.12px currentColor;">8</div>
<div style="position:absolute;left:356.50px;top:272.70px;width:49.5px;height:29px;box-sizing:border-box;border:2px solid #5a09c4;border-radius:15px;background:#fff"></div>
<div class="t" style="left:331.25px;width:100px;text-align:center;top:283.72px;font-size:8.6px;font-weight:700;color:#5a09c4;">Cancel</div>
<div style="position:absolute;left:410.80px;top:272.70px;width:60px;height:29px;background:#f3effb;border-radius:15px"></div>
<div class="t" style="left:427.00px;top:284.11px;font-size:7.9px;font-weight:700;color:#a58ad8;">Apply</div>
</div>
</body></html>
